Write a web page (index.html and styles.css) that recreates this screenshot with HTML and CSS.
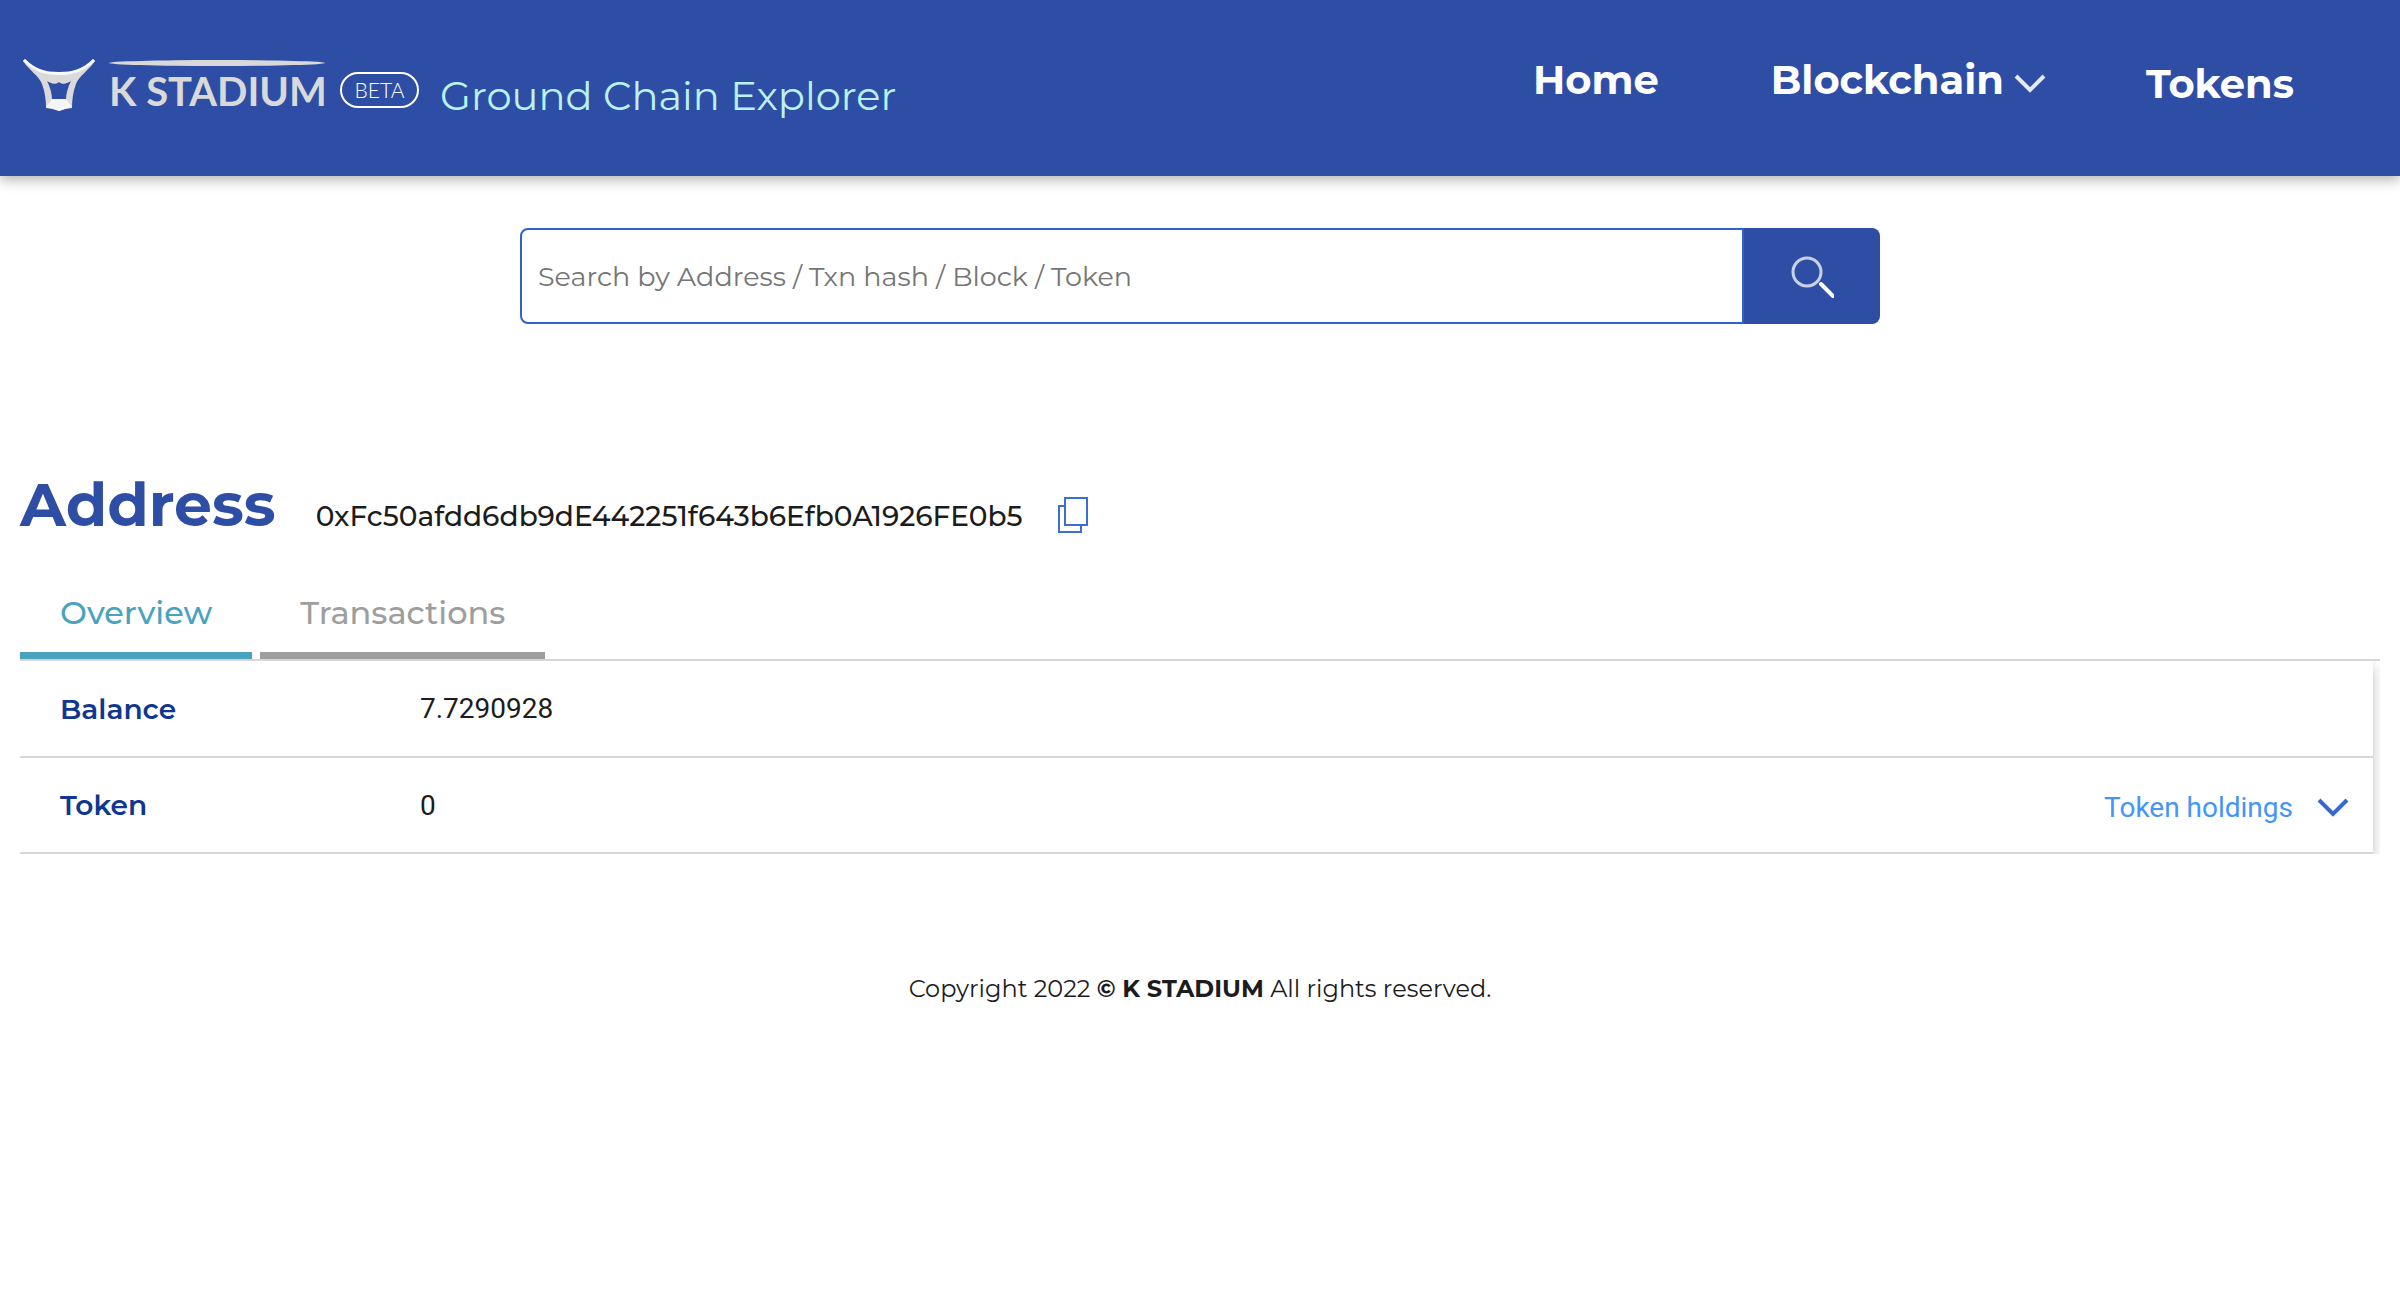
FILE: index.html
```html
<!DOCTYPE html>
<html lang="en">
<head>
<meta charset="utf-8">
<meta name="viewport" content="width=device-width, initial-scale=1">
<title>K STADIUM Ground Chain Explorer</title>
<link rel="stylesheet" href="styles.css">
</head>
<body>
<header class="header">
  <a class="brand" href="#">
    <svg class="brand-mark" viewBox="0 0 72 52" aria-hidden="true">
      <path fill="#dadada" d="M0 2 2 0C12 10 22 14 36 14S60 10 70 0l2 2C66 11 56 17 53 25c-3 8-4 16-4 24l-7 1-6 2-6-2-7-1c0-8-1-16-4-24C16 17 6 11 0 2Z"/>
      <path fill="#f8f8f8" d="M0 2 2 0C12 10 22 13 36 13S60 10 70 0l2 2C60 13 50 16 36 16S12 13 0 2Z"/>
      <path fill="#2e4ea6" d="M24 22c4 3 9 3 12-1 3 4 8 4 12 1-3 6-5 12-5 19H29c0-7-2-13-5-19Z"/>
      <path fill="#dadada" d="M26 21h20c-1 4-7 5-10 2-3 3-9 2-10-2Z"/>
      <path fill="#f5f5f5" d="M29 40h14l6 8-7 2-6 2-6-2-7-2Z"/>
    </svg>
    <span class="brand-name">
      <svg class="brand-roof" viewBox="0 0 216 6" preserveAspectRatio="none" aria-hidden="true"><ellipse cx="108" cy="3" rx="108" ry="3" fill="#d9d9d9"/></svg>
      <span class="brand-word">K STADIUM</span>
    </span>
    <span class="brand-beta">BETA</span>
    <span class="brand-title">Ground Chain Explorer</span>
  </a>
  <nav class="nav" aria-label="Main">
    <a class="nav-link nav-link-menu" href="#">Home</a>
    <button class="nav-link nav-link-menu" type="button">Blockchain
      <svg class="nav-arrow" viewBox="0 0 32 20" aria-hidden="true"><path d="M2 2 16 16 30 2" fill="none" stroke="#e6eaf5" stroke-width="4"/></svg>
    </button>
    <a class="nav-link" href="#">Tokens</a>
  </nav>
</header>

<main class="main">
  <form class="search" role="search">
    <input class="search-input" type="text" aria-label="Search" placeholder="Search by Address / Txn hash / Block / Token">
    <button class="search-button" type="button" aria-label="Search">
      <svg class="search-icon" viewBox="0 0 44 44" aria-hidden="true"><circle cx="17" cy="18" r="14" fill="none" stroke="#c9d1e8" stroke-width="3"/><path d="M31 30 43 42" stroke="#fff" stroke-width="4" stroke-linecap="round"/></svg>
    </button>
  </form>

  <div class="heading">
    <h1 class="heading-title">Address</h1>
    <span class="heading-hash">0xFc50afdd6db9dE442251f643b6Efb0A1926FE0b5</span>
    <button class="copy" type="button" aria-label="Copy address">
      <svg class="copy-icon" viewBox="0 0 32 38" aria-hidden="true"><g fill="#fff" stroke="#3c6fd4" stroke-width="2"><path d="M2 10h22v26H2Z"/><path d="M8 2h22v27H8Z"/></g></svg>
    </button>
  </div>

  <div class="tabs" role="tablist">
    <button class="tab tab-active" type="button" role="tab" aria-selected="true">Overview</button>
    <button class="tab" type="button" role="tab" aria-selected="false">Transactions</button>
  </div>

  <div class="panel">
    <table class="details">
      <tr>
        <th scope="row">Balance</th>
        <td>7.7290928</td>
        <td></td>
      </tr>
      <tr>
        <th scope="row">Token</th>
        <td>0</td>
        <td class="details-action">
          <button class="holdings" type="button">Token holdings
            <svg class="holdings-arrow" viewBox="0 0 32 20" aria-hidden="true"><path d="M2 2 16 16 30 2" fill="none" stroke="#3767cf" stroke-width="4"/></svg>
          </button>
        </td>
      </tr>
    </table>
  </div>
</main>

<footer class="footer">Copyright 2022 <b>© K STADIUM</b> All rights reserved.</footer>
</body>
</html>
```
FILE: styles.css
```css
* {
  box-sizing: border-box;
}

body {
  margin: 0;
  background: #fff;
  color: #1c1c1c;
  font-family: Montserrat, Inter, sans-serif;
}

button {
  padding: 0;
  border: 0;
  background: none;
  font: inherit;
  cursor: pointer;
}

a {
  text-decoration: none;
}

svg {
  display: block;
}

.header {
  display: flex;
  justify-content: space-between;
  align-items: flex-start;
  height: 176px;
  padding: 56px 106px 0 23px;
  background: #2e4ea6;
  box-shadow: 0 4px 12px rgba(0, 0, 0, 0.3);
}

.brand {
  display: flex;
  align-items: flex-start;
}

.brand-mark {
  width: 72px;
  height: 52px;
  margin: 3px 14px 0 0;
}

.brand-name {
  display: flex;
  flex-direction: column;
  width: 216px;
  padding-top: 4px;
}

.brand-roof {
  width: 216px;
  height: 6px;
}

.brand-word {
  color: #d9d9d9;
  font: 700 40px/50px Lato, sans-serif;
  white-space: nowrap;
}

.brand-beta {
  width: 79px;
  height: 36px;
  margin: 16px 21px 0 15px;
  border: 2px solid #fff;
  border-radius: 18px;
  color: #fff;
  font: 300 21px/32px Lato, sans-serif;
  text-align: center;
}

.brand-title {
  color: #b9f2ee;
  font-size: 40px;
  line-height: 48px;
  padding-top: 16px;
  white-space: nowrap;
}

.nav {
  display: flex;
  align-items: center;
}

.nav-link {
  display: flex;
  align-items: center;
  gap: 10px;
  color: #fff;
  font-size: 40px;
  line-height: 48px;
  font-weight: 700;
}

.nav-link-menu {
  padding-bottom: 8px;
  margin-right: 100px;
}

a.nav-link-menu {
  margin-right: 112px;
}

.nav-arrow,
.holdings-arrow {
  width: 32px;
  height: 20px;
}

.nav-arrow {
  align-self: flex-end;
  margin-bottom: 10px;
}

.main {
  padding: 52px 20px 0;
}

.search {
  display: flex;
  width: 1360px;
  max-width: 100%;
  height: 96px;
  margin: 0 auto 141px;
}

.search-input {
  flex: 1;
  min-width: 0;
  padding: 0 16px;
  border: 2px solid #2e62cc;
  border-radius: 8px 0 0 8px;
  outline: 0;
  font: inherit;
  font-size: 27px;
}

.search-input::placeholder {
  color: #757575;
  opacity: 1;
}

.search-button {
  display: flex;
  align-items: center;
  justify-content: center;
  width: 136px;
  border-radius: 0 8px 8px 0;
  background: #2e4ea6;
}

.search-icon {
  width: 44px;
  height: 44px;
}

.heading {
  display: flex;
  align-items: baseline;
}

.heading-title {
  margin: 0 40px 0 0;
  color: #2e4ea6;
  font-size: 60px;
  line-height: 80px;
}

.heading-hash {
  font-size: 28px;
  font-weight: 500;
}

.copy {
  align-self: flex-end;
  margin: 0 0 11px 34px;
}

.copy-icon {
  width: 32px;
  height: 38px;
}

.tabs {
  display: flex;
  gap: 8px;
  margin-top: 46px;
  border-bottom: 2px solid #d6d6d6;
}

.tab {
  padding: 0 40px 17px;
  border-bottom: 7px solid #9e9e9e;
  color: #9e9e9e;
  font-size: 32px;
  font-weight: 500;
  line-height: 44px;
}

.tab-active {
  border-color: #4aa3be;
  color: #4aa3be;
}

.panel {
  padding-right: 7px;
  overflow: hidden;
}

.details {
  width: 100%;
  border-collapse: collapse;
  box-shadow: 0 6px 12px rgba(0, 0, 0, 0.25);
  font-size: 28px;
}

.details tr {
  height: 96px;
  border-bottom: 2px solid #d6d6d6;
}

.details th {
  width: 360px;
  padding: 0 0 0 40px;
  color: #10368f;
  font-weight: 600;
  text-align: left;
}

.details td {
  padding: 0 0 0 40px;
  font-family: Roboto, sans-serif;
}

.details .details-action {
  padding: 5px 24px 0 0;
}

.holdings {
  display: flex;
  align-items: center;
  gap: 24px;
  margin-left: auto;
  color: #4495f7;
}

.footer {
  margin-top: 119px;
  font-size: 24px;
  line-height: 32px;
  text-align: center;
}
```
